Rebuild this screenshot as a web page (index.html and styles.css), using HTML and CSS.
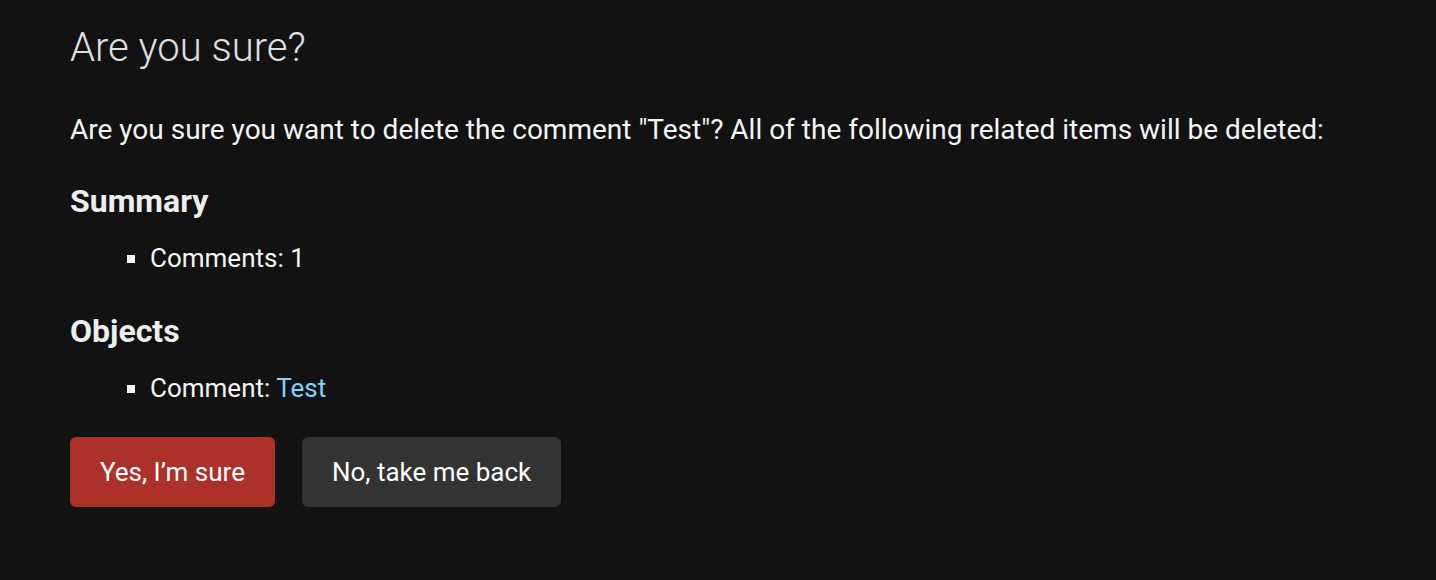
FILE: index.html
```html
<!DOCTYPE html>
<html lang="en">
<head>
<meta charset="utf-8">
<title>Are you sure?</title>
<link rel="stylesheet" href="styles.css">
</head>
<body>
<main class="content">
  <h1 class="title">Are you sure?</h1>
  <p class="intro">Are you sure you want to delete the comment "Test"? All of the following related items will be deleted:</p>
  <h2 class="section">Summary</h2>
  <ul class="items">
    <li>Comments: 1</li>
  </ul>
  <h2 class="section">Objects</h2>
  <ul class="items">
    <li>Comment: <a href="#" class="link">Test</a></li>
  </ul>
  <form class="actions">
    <button type="button" class="btn btn-delete">Yes, I’m sure</button>
    <a href="#" class="btn btn-cancel">No, take me back</a>
  </form>
</main>
</body>
</html>
```

FILE: styles.css
```css
html, body {
  margin: 0;
  padding: 0;
  background: #121212;
  color: #eeeeee;
  font-family: Roboto, "Noto Sans", "Liberation Sans", sans-serif;
}

.content {
  padding: 24px 70px 0 70px;
}

.title {
  margin: 0;
  font-size: 40px;
  font-weight: 300;
  line-height: 48px;
  color: #e0e0e0;
}

.intro {
  margin: 40px 0 0 0;
  font-size: 28px;
  line-height: 36px;
  color: #f5f5f5;
}

.section {
  margin: 33px 0 0 0;
  font-size: 32px;
  font-weight: 700;
  line-height: 40px;
  color: #eeeeee;
}

.items + .section {
  margin-top: 37px;
}

.items {
  margin: 21px 0 0 0;
  padding-left: 80px;
  list-style-type: square;
  font-size: 26px;
  line-height: 32px;
  color: #f5f5f5;
}

.link {
  color: #81d4fa;
  text-decoration: none;
}

.actions {
  display: flex;
  gap: 27px;
  margin-top: 33px;
}

.btn {
  display: inline-flex;
  align-items: center;
  justify-content: center;
  height: 70px;
  padding: 0 30px;
  box-sizing: border-box;
  border: none;
  border-radius: 6px;
  font-family: inherit;
  font-size: 26px;
  color: #ffffff;
  text-decoration: none;
  cursor: pointer;
}

.btn-delete {
  background: #ad312b;
}

.btn-cancel {
  background: #333333;
}
```
